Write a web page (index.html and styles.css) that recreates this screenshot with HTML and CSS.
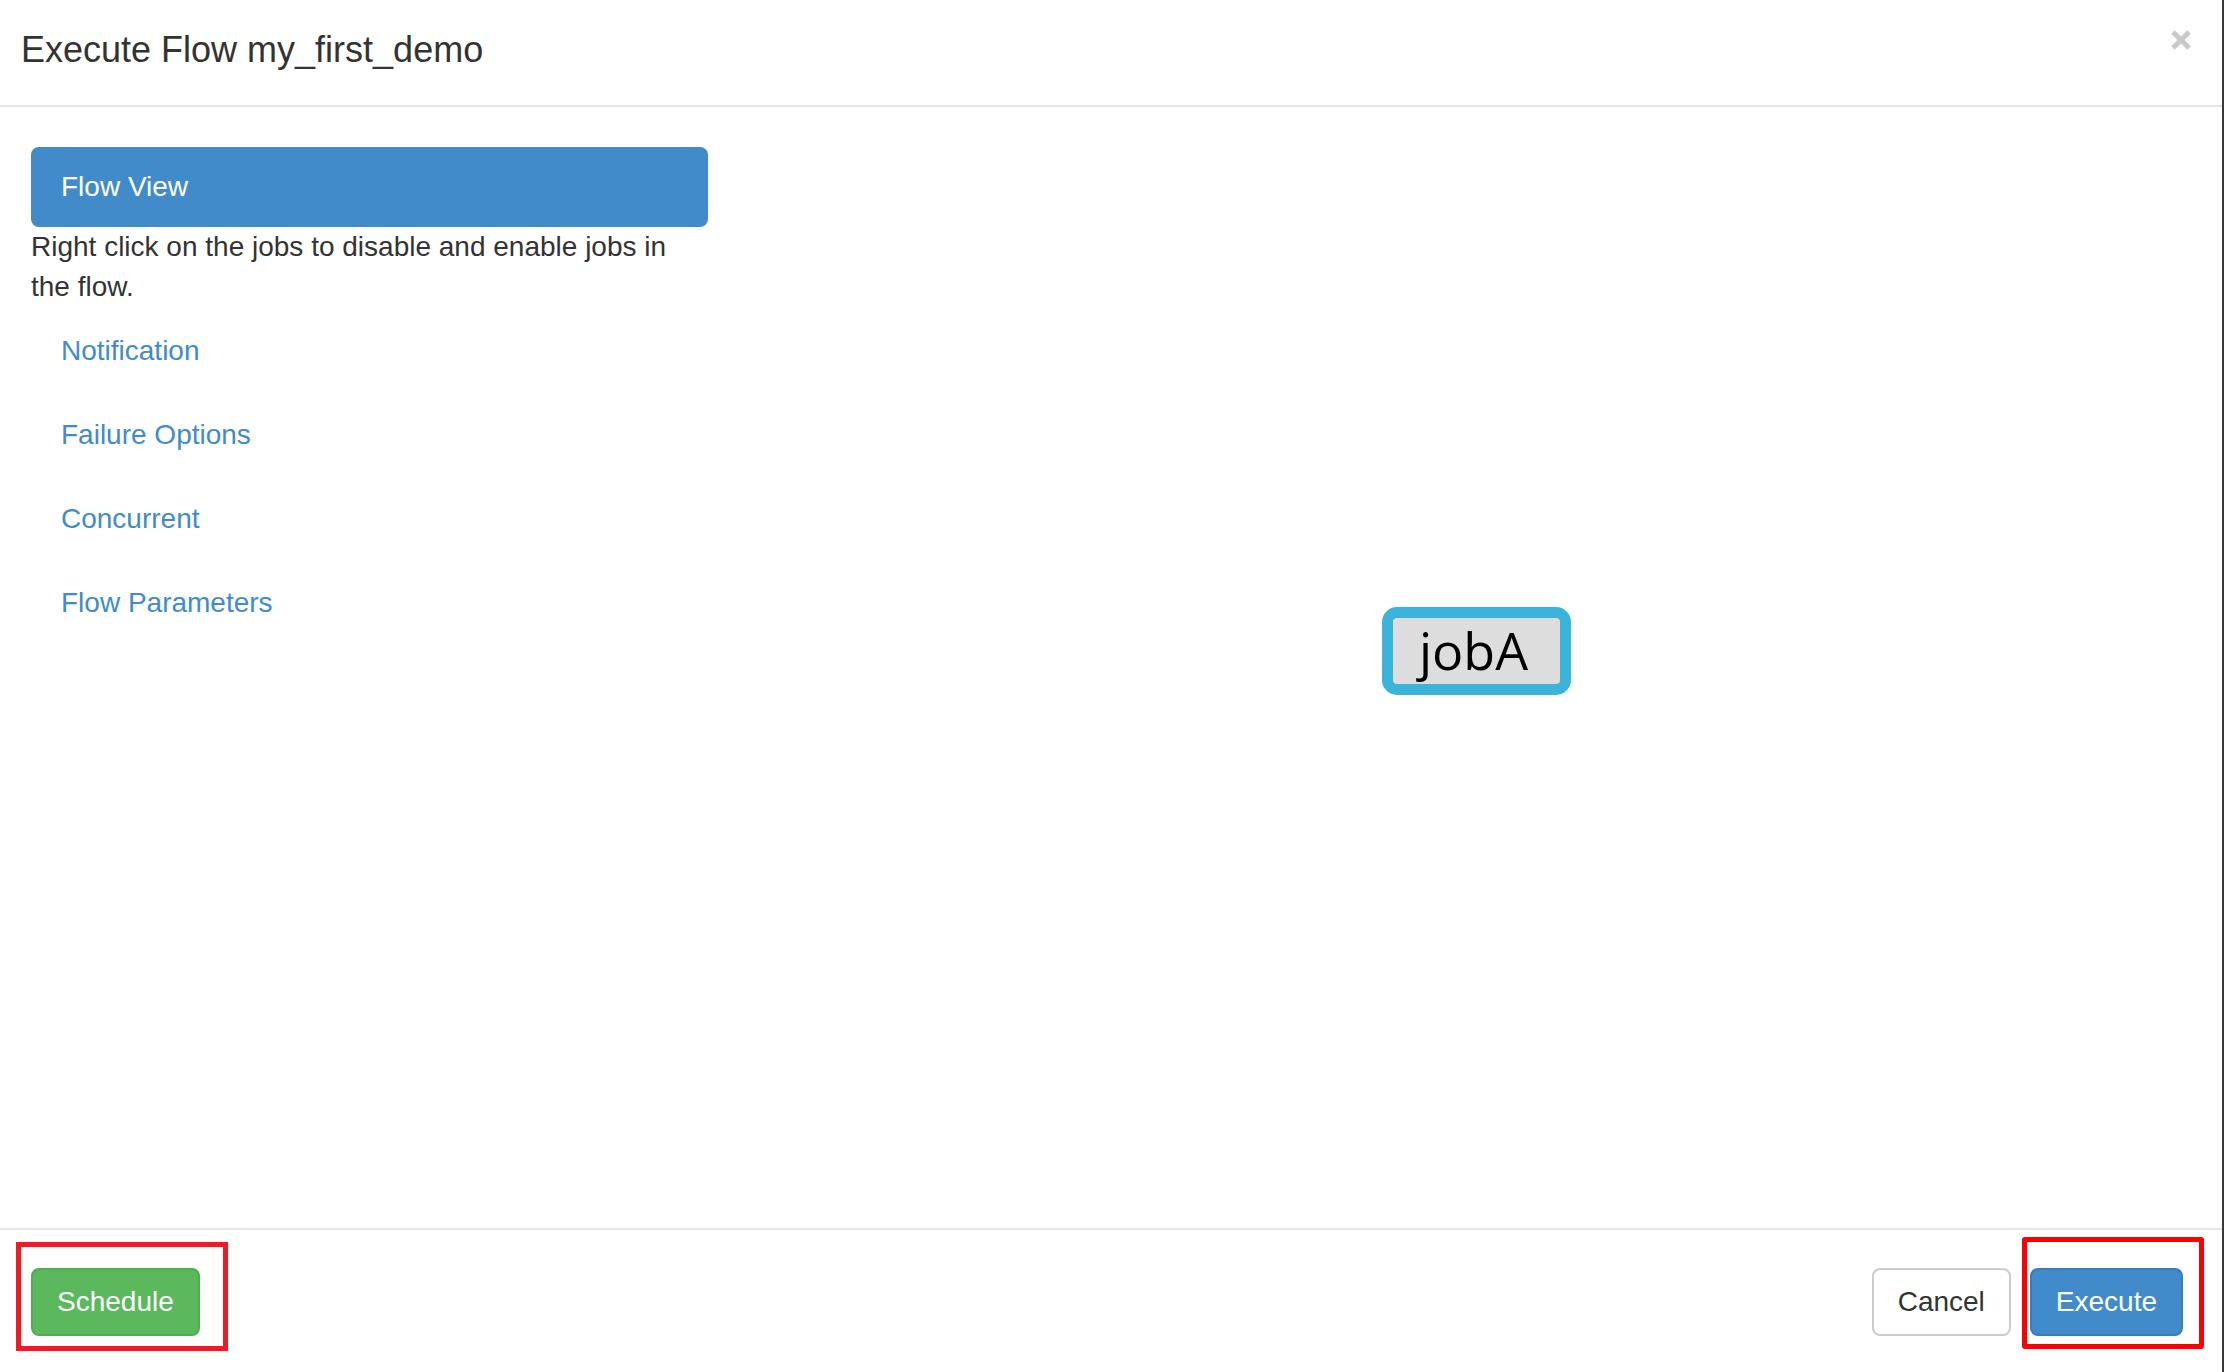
FILE: index.html
```
<!DOCTYPE html>
<html lang="en">
<head>
<meta charset="utf-8">
<title>Execute Flow my_first_demo</title>
<link rel="stylesheet" href="styles.css">
</head>
<body>
<div class="modal">
  <div class="modal-header">
    <h4 class="modal-title">Execute Flow my_first_demo</h4>
    <button class="close" type="button" aria-label="Close">
      <svg width="20" height="20" viewBox="0 0 20 20"><path d="M2 2 L18 18 M18 2 L2 18" stroke="#c9c9c9" stroke-width="5" stroke-linecap="butt"/></svg>
    </button>
  </div>
  <div class="modal-body">
    <div class="side">
      <div class="pill active">Flow View</div>
      <p class="hint">Right click on the jobs to disable and enable jobs in the flow.</p>
      <ul class="pills">
        <li class="pill"><a href="#">Notification</a></li>
        <li class="pill"><a href="#">Failure Options</a></li>
        <li class="pill"><a href="#">Concurrent</a></li>
        <li class="pill"><a href="#">Flow Parameters</a></li>
      </ul>
    </div>
    <div class="canvas">
      <div class="node"><span>jobA</span></div>
    </div>
  </div>
  <div class="modal-footer">
    <span class="mark mark-left"><button class="btn btn-success" type="button">Schedule</button><span class="hl hl-schedule"></span></span>
    <div class="right">
      <button class="btn btn-default" type="button">Cancel</button>
      <span class="mark"><button class="btn btn-primary" type="button">Execute</button><span class="hl hl-execute"></span></span>
    </div>
  </div>
</div>
</body>
</html>
```
FILE: styles.css
```
html, body {
  margin: 0;
  padding: 0;
  background: #fff;
}
body {
  font-family: "Liberation Sans", Arial, Helvetica, sans-serif;
  color: #333;
}
.modal {
  width: 2224px;
  height: 1372px;
  box-sizing: border-box;
  border-right: 2px solid #3a3a3a;
  display: flex;
  flex-direction: column;
  background: #fff;
  overflow: hidden;
}
.modal-header {
  height: 105px;
  border-bottom: 2px solid #e5e5e5;
  display: flex;
  justify-content: space-between;
  align-items: flex-start;
  padding: 0 31px 0 21px;
  flex: none;
}
.modal-title {
  margin: 0;
  padding-top: 24px;
  font-size: 36px;
  line-height: 51px;
  font-weight: normal;
  color: #333;
}
.close {
  margin: 30px 0 0 0;
  padding: 0;
  border: 0;
  background: transparent;
  width: 20px;
  height: 20px;
  display: block;
}
.close svg { display: block; }
.modal-body {
  flex: 1;
  display: flex;
  padding: 40px 0 0 31px;
}
.side {
  width: 677px;
  flex: none;
}
.pill {
  height: 80px;
  line-height: 80px;
  padding: 0 30px;
  font-size: 28px;
  border-radius: 8px;
}
.pill.active {
  background: #428bca;
  color: #fff;
}
.hint {
  margin: 0;
  font-size: 28px;
  line-height: 40px;
  color: #333;
}
.pills {
  list-style: none;
  margin: 0;
  padding: 0;
}
.pills .pill {
  margin-top: 4px;
}
.pills a {
  color: #428bca;
  text-decoration: none;
}
.canvas {
  flex: 1;
  position: relative;
}
.node {
  position: absolute;
  left: 674px;
  top: 460px;
  width: 189px;
  height: 88px;
  box-sizing: border-box;
  border: 11px solid #3ab4da;
  border-radius: 15px;
  background: #dddddd;
  display: flex;
  align-items: center;
  justify-content: center;
  font-family: "Open Sans", "DejaVu Sans", sans-serif;
  font-size: 52px;
  line-height: 52px;
  color: #000;
}
.node span { margin-left: -6px; margin-top: -2px; }
.modal-footer {
  flex: none;
  height: 144px;
  box-sizing: border-box;
  border-top: 2px solid #e5e5e5;
  padding: 38px 39px 0 31px;
  display: flex;
  justify-content: space-between;
  align-items: flex-start;
}
.right {
  display: flex;
  align-items: flex-start;
  gap: 19px;
}
.mark {
  position: relative;
  display: block;
}
.btn {
  display: block;
  height: 68px;
  box-sizing: border-box;
  padding: 0 24px;
  font-family: "Liberation Sans", Arial, Helvetica, sans-serif;
  font-size: 28px;
  line-height: 64px;
  border: 2px solid transparent;
  border-radius: 8px;
  cursor: pointer;
}
.btn-success {
  background: #5cb85c;
  border-color: #4cae4c;
  color: #fff;
}
.btn-primary {
  background: #428bca;
  border-color: #357ebd;
  color: #fff;
}
.btn-default {
  background: #fff;
  border-color: #ccc;
  color: #333;
}
.hl {
  position: absolute;
  box-sizing: border-box;
  border: 5px solid #ed1c24;
  pointer-events: none;
}
.hl-schedule {
  left: -15px;
  top: -26px;
  right: -28px;
  bottom: -15px;
}
.hl-execute {
  left: -8px;
  top: -31px;
  right: -21px;
  bottom: -13px;
  border-color: #ff0000;
  border-radius: 3px;
}
```
